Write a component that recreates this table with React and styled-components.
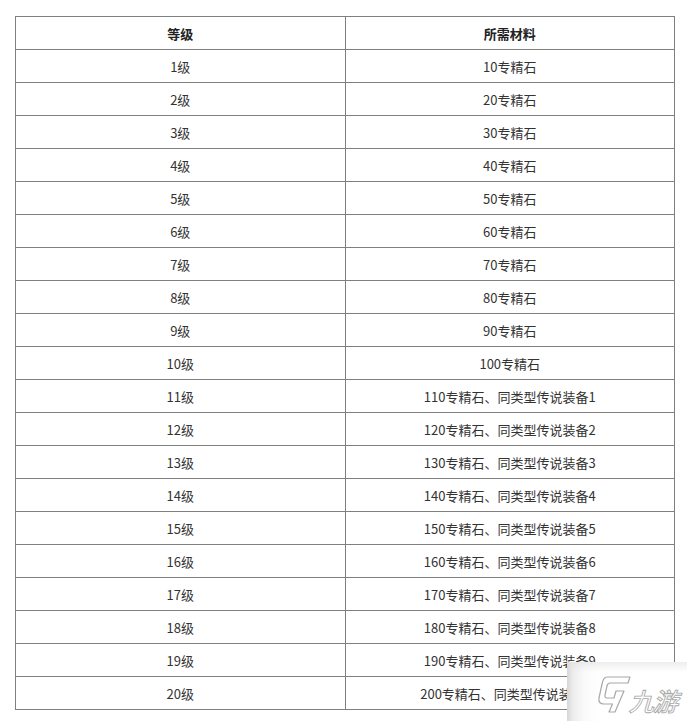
import styled, { createGlobalStyle } from "styled-components"

const GlobalStyle = createGlobalStyle`
  html, body {
    margin: 0;
    padding: 0;
    background: #fff;
  }
  body {
    font-family: "Microsoft YaHei", "Noto Sans CJK SC", "Noto Sans", sans-serif;
  }
`

const Page = styled.div`
  width: 687px;
  height: 721px;
  position: relative;
  overflow: hidden;
  padding: 16px 0 0 15px;
  box-sizing: border-box;
`

const Table = styled.table`
  border-collapse: collapse;
  width: 660px;
  table-layout: fixed;
  color: #333;
  font-size: 13px;
`

const Row = styled.tr`
  height: 33px;
`

const Cell = styled.td`
  border: 1px solid #7f7f7f;
  text-align: center;
  vertical-align: middle;
  padding: 0;
  font-weight: ${p => (p.$head ? 700 : 400)};
  color: ${p => (p.$head ? "#222" : "#333")};
`

const Watermark = styled.div`
  position: absolute;
  left: 567px;
  top: 662px;
  width: 120px;
  height: 59px;
  background:
    linear-gradient(180deg, rgba(225,225,225,0.6) 0, rgba(255,255,255,0) 10px),
    linear-gradient(90deg, #d6d6d6 0, #ededed 6px, #fafafa 18px, #fff 34px);
  display: flex;
  align-items: flex-end;
  gap: 1px;
  padding: 0 0 8px 30px;
  box-sizing: border-box;
`

const BrandText = styled.span`
  font-family: "Noto Sans CJK SC", sans-serif;
  font-size: 25px;
  font-weight: 500;
  color: #fff;
  -webkit-text-stroke: 0.9px #a8a8a8;
  transform: skewX(-16deg);
  letter-spacing: -1px;
  line-height: 26px;
  white-space: nowrap;
`

const levels = Array.from({ length: 20 }, (_, i) => i + 1)

function material(n) {
  const base = `${n * 10}专精石`
  return n > 10 ? `${base}、同类型传说装备${n - 10}` : base
}

function Logo() {
  return (
    <svg width="34" height="37" viewBox="0 0 34 37" fill="#fff" stroke="#a8a8a8" strokeWidth="1.2" strokeLinejoin="round">
      <path d="M10 1 L33 1 L31 7 L13 7 Q10.5 7 10 10 L8 19 Q7.5 22 10 22 L17 22 L19 15 L27 15 L18 36 L12 36 L15.5 28 L7 28 Q1 28 2 22 L5 8 Q6.5 1 10 1 Z" />
    </svg>
  )
}

export default function App() {
  return (
    <Page>
      <GlobalStyle />
      <Table>
        <tbody>
          <Row>
            <Cell $head>等级</Cell>
            <Cell $head>所需材料</Cell>
          </Row>
          {levels.map(n => (
            <Row key={n}>
              <Cell>{n}级</Cell>
              <Cell>{material(n)}</Cell>
            </Row>
          ))}
        </tbody>
      </Table>
      <Watermark>
        <Logo />
        <BrandText>九游</BrandText>
      </Watermark>
    </Page>
  )
}
